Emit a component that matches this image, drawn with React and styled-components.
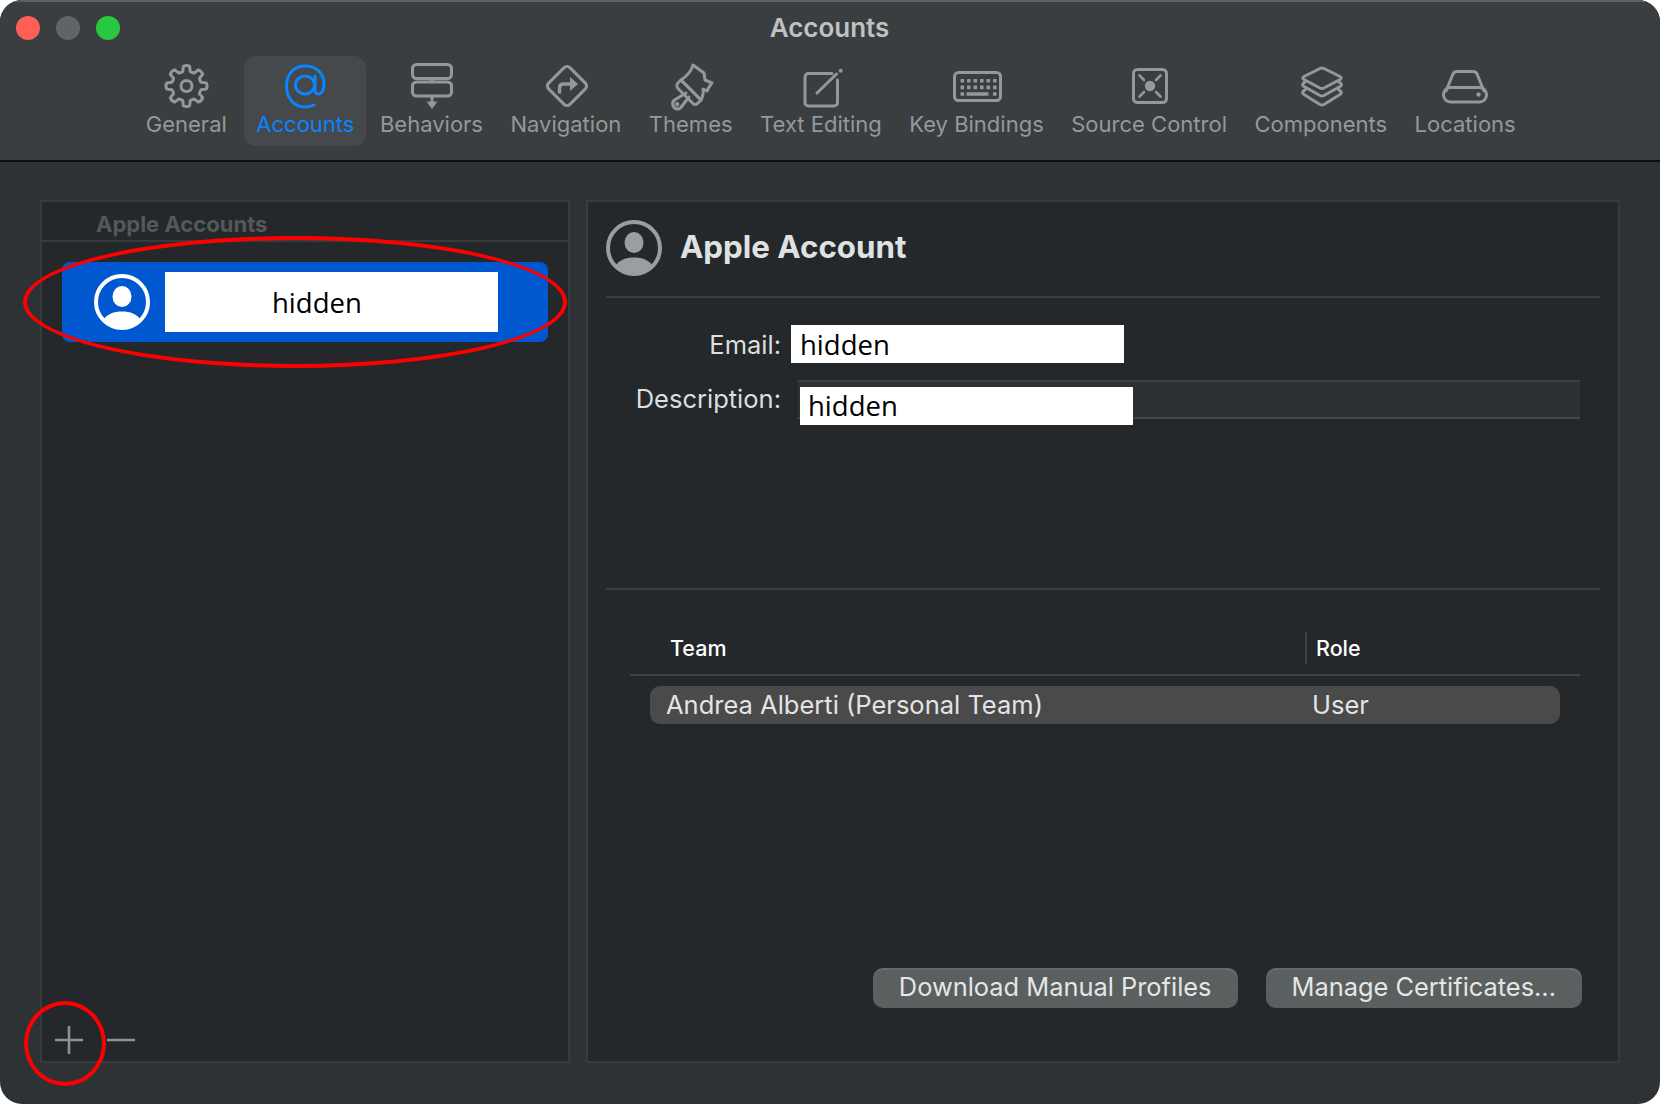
import React from "react";
import styled, { createGlobalStyle } from "styled-components";

const ICON = "#95989a";
const BLUE = "#0a84ff";

const gearPath = (cx, cy, teeth, outer, inner) => {
  const pts = [];
  const step = (Math.PI * 2) / teeth;
  for (let i = 0; i < teeth; i++) {
    const a = -Math.PI / 2 + i * step;
    const at = (r, o) => `${(cx + r * Math.cos(a + o)).toFixed(2)} ${(cy + r * Math.sin(a + o)).toFixed(2)}`;
    pts.push(`${i === 0 ? "M" : "L"}${at(inner, -step * 0.32)}`);
    pts.push(`L${at(outer, -step * 0.2)}`);
    pts.push(`Q${at(outer + 1.4, 0)} ${at(outer, step * 0.2)}`);
    pts.push(`L${at(inner, step * 0.32)}`);
    pts.push(`Q${at(inner - 0.6, step * 0.5)} ${at(inner, step * 0.68)}`);
  }
  return pts.join(" ") + "Z";
};

const Svg = ({ children, color = ICON }) => (
  <IconSvg viewBox="0 0 50 50" stroke={color} fill="none" strokeWidth="3" strokeLinecap="round" strokeLinejoin="round">
    {children}
  </IconSvg>
);

const GeneralIcon = () => (
  <Svg>
    <path d={gearPath(25.5, 26, 8, 20, 15)} />
    <circle cx="25.5" cy="26" r="5.5" />
  </Svg>
);

const AccountsIcon = () => (
  <Svg color={BLUE}>
    <ellipse cx="25" cy="25" rx="9.5" ry="9" />
    <path d="M34 45 C31 46.5 28 47 25 47 C13 47 6.5 37 6.5 26 C6.5 14 14 6 25 6 C36 6 44 13 44 24 C44 29 42 34 38.5 34 C36 34 35 32 35 29 V16" />
  </Svg>
);

const BehaviorsIcon = () => (
  <Svg>
    <rect x="6.5" y="4.5" width="39" height="14" rx="4" />
    <rect x="6.5" y="22" width="39" height="14" rx="4" />
    <path d="M26 18.5 V22 M26 36 V42" />
    <path d="M20.5 41.5 H31.5 L26 49Z" fill={ICON} stroke="none" />
  </Svg>
);

const NavigationIcon = () => (
  <Svg>
    <rect x="11" y="11" width="30" height="30" rx="4" transform="rotate(45 26 26)" />
    <path d="M18.5 33.5 V28 Q18.5 24 22.5 24 H30" strokeLinecap="butt" strokeWidth="3.5" />
    <path d="M29 17 L37 24 L29 31Z" fill={ICON} stroke="none" />
  </Svg>
);

const ThemesIcon = () => (
  <Svg>
    <path d="M27 5 C25.5 11 21 16 15 20 L35 40 C37 36 38 33 37 29 L41 31 C42 28 44 26 46 23 L39 20 L38 13 Z" />
    <path d="M11.5 23.5 L15 20 L35 40 L31.5 43.5 C30 45 28 44.5 27 43.5 L12 28.5 C11 27.5 10.5 25 11.5 23.5Z" />
    <path d="M20 33 L8.5 40 C5 43 7 49 11.5 49 C13.5 49 15 48 16 46 L23 37" />
    <circle cx="11.2" cy="44.2" r="1.2" strokeWidth="2" />
  </Svg>
);

const TextEditingIcon = () => (
  <Svg>
    <path d="M36 13.5 H12.5 A3.5 3.5 0 0 0 9 17 V42.5 A3.5 3.5 0 0 0 12.5 46 H38 A3.5 3.5 0 0 0 41.5 42.5 V20" />
    <path d="M21 33 L40.5 14" />
    <circle cx="44.7" cy="10.7" r="2" fill={ICON} stroke="none" />
  </Svg>
);

const KEY_ROWS = [19, 25.6, 32.2];
const KEY_COLS = [8.5, 15, 21.5, 28, 34.5, 41];

const KeyBindingsIcon = () => (
  <Svg>
    <rect x="2.5" y="12.5" width="46" height="28" rx="4" />
    <g fill={ICON} stroke="none">
      {KEY_ROWS.slice(0, 2).map((y) =>
        KEY_COLS.map((x) => <rect key={`${x}-${y}`} x={x} y={y} width="3.6" height="3.6" rx="0.6" />)
      )}
      <rect x="8.5" y="32.2" width="3.6" height="3.6" rx="0.6" />
      <rect x="14.5" y="32.2" width="22" height="3.6" rx="0.6" />
      <rect x="41" y="32.2" width="3.6" height="3.6" rx="0.6" />
    </g>
  </Svg>
);

const SourceControlIcon = () => (
  <Svg>
    <rect x="9.5" y="9.5" width="33" height="33" rx="4" />
    <circle cx="26" cy="26" r="5.2" fill={ICON} stroke="none" />
    <path d="M15.5 15.5 L20 20 M36.5 15.5 L32 20 M15.5 36.5 L20 32 M36.5 36.5 L32 32" strokeWidth="2.6" />
  </Svg>
);

const ComponentsIcon = () => (
  <Svg>
    <path d="M24 8.5 Q26 7.5 28 8.5 L44 16.5 Q46.5 18 44 19.5 L28 28 Q26 29 24 28 L8 19.5 Q5.5 18 8 16.5Z" />
    <path d="M9.5 21.5 L7.5 23 Q5.5 25 8 26.5 L24 35.5 Q26 36.5 28 35.5 L44 26.5 Q46.5 25 44.5 23 L42.5 21.5" />
    <path d="M9.5 29.5 L7.5 31 Q5.5 33 8 34.5 L24 44.5 Q26 45.5 28 44.5 L44 34.5 Q46.5 33 44.5 31 L42.5 29.5" />
  </Svg>
);

const LocationsIcon = () => (
  <Svg>
    <rect x="3.5" y="27.5" width="43" height="14.5" rx="7" />
    <path d="M6 31 L13 14 Q14 11.5 17 11.5 H33 Q36 11.5 37 14 L44 31" />
    <circle cx="38.5" cy="34.5" r="2.2" fill={ICON} stroke="none" />
  </Svg>
);

const tabs = [
  { label: "General", icon: GeneralIcon },
  { label: "Accounts", icon: AccountsIcon, active: true },
  { label: "Behaviors", icon: BehaviorsIcon },
  { label: "Navigation", icon: NavigationIcon },
  { label: "Themes", icon: ThemesIcon },
  { label: "Text Editing", icon: TextEditingIcon },
  { label: "Key Bindings", icon: KeyBindingsIcon },
  { label: "Source Control", icon: SourceControlIcon },
  { label: "Components", icon: ComponentsIcon },
  { label: "Locations", icon: LocationsIcon },
];

const Avatar = ({ size = 56, ring, person }) => (
  <AvatarSvg viewBox="0 0 56 56" width={size} height={size}>
    <circle cx="28" cy="28" r="26" fill="none" stroke={ring} strokeWidth="4" />
    <ellipse cx="28" cy="22.5" rx="9.5" ry="10.5" fill={person} />
    <path d="M9 46 C13 40 20 37.5 28 37.5 C36 37.5 43 40 47 46 C42 51 35 54 28 54 C21 54 14 51 9 46Z" fill={person} />
  </AvatarSvg>
);

const App = () => {
  return (
    <>
      <GlobalStyle />
      <Window>
        <TitleBar>
          <TitleRow>
            <Lights>
              <Light color="#ff5f57" />
              <Light color="#5f6465" />
              <Light color="#28c840" />
            </Lights>
            <WindowTitle>Accounts</WindowTitle>
          </TitleRow>
          <Tabs>
            {tabs.map(({ label, icon: Icon, active }) => (
              <Tab key={label} $active={active}>
                <IconSlot>
                  <Icon />
                </IconSlot>
                <TabLabel $active={active}>{label}</TabLabel>
              </Tab>
            ))}
          </Tabs>
        </TitleBar>

        <Body>
          <LeftPanel>
            <ListHeader>Apple Accounts</ListHeader>
            <List>
              <AccountRow>
                <Avatar ring="#fff" person="#fff" />
                <RowRedaction>hidden</RowRedaction>
              </AccountRow>
            </List>
            <ListFooter>
              <FooterIcon viewBox="0 0 28 28">
                <path d="M0.5 14 H27.5 M14 0.5 V27.5" />
              </FooterIcon>
              <FooterIcon viewBox="0 0 28 28">
                <path d="M0.5 14 H27.5" />
              </FooterIcon>
            </ListFooter>
            <RedEllipse />
            <RedCircle />
          </LeftPanel>

          <RightPanel>
            <DetailHeader>
              <Avatar ring="#9b9ea0" person="#9b9ea0" />
              <DetailTitle>Apple Account</DetailTitle>
            </DetailHeader>
            <Form>
              <FieldLabel>Email:</FieldLabel>
              <EmailField>hidden</EmailField>
              <DescriptionLabel>Description:</DescriptionLabel>
              <DescriptionField>
                <DescriptionRedaction>hidden</DescriptionRedaction>
              </DescriptionField>
            </Form>
            <TeamSection>
              <TeamHead>
                <HeadCell>Team</HeadCell>
                <RoleCell>Role</RoleCell>
              </TeamHead>
              <TeamRow>
                <span>Andrea Alberti (Personal Team)</span>
                <span>User</span>
              </TeamRow>
            </TeamSection>
            <Actions>
              <ActionButton>Download Manual Profiles</ActionButton>
              <ActionButton>Manage Certificates...</ActionButton>
            </Actions>
          </RightPanel>
        </Body>
      </Window>
    </>
  );
};

export default App;

const GlobalStyle = createGlobalStyle`
  html, body {
    margin: 0;
    padding: 0;
    background: #fff;
  }
  * {
    box-sizing: border-box;
  }
`;

const Window = styled.div`
  width: 1660px;
  height: 1104px;
  display: flex;
  flex-direction: column;
  border-radius: 22px;
  overflow: hidden;
  background: #2d3235;
  font-family: Inter, "Liberation Sans", sans-serif;
`;

const TitleBar = styled.header`
  height: 162px;
  flex-shrink: 0;
  background: #3a3e40;
  border-top: 2px solid #5e6163;
  border-bottom: 2px solid #0c0d0e;
`;

const TitleRow = styled.div`
  height: 54px;
  display: grid;
  grid-template-columns: 1fr auto 1fr;
  align-items: center;
`;

const Lights = styled.div`
  display: flex;
  gap: 16px;
  padding-left: 16px;
  margin-top: -2px;
`;

const Light = styled.span`
  width: 24px;
  height: 24px;
  border-radius: 50%;
  background: ${(p) => p.color};
`;

const WindowTitle = styled.div`
  font-size: 26px;
  font-weight: 600;
  color: #bfc1c2;
  margin: -4px 0 0 -1px;
`;

const Tabs = styled.nav`
  display: flex;
  justify-content: center;
  gap: 3.5px;
  padding-left: 1.5px;
`;

const Tab = styled.div`
  height: 90px;
  padding: 0 12px;
  display: flex;
  flex-direction: column;
  align-items: center;
  border-radius: 12px;
  background: ${(p) => (p.$active ? "#45494b" : "transparent")};
  ${(p) => p.$active && "margin: 0 -2px 0 2px;"}
`;

const IconSlot = styled.div`
  height: 50px;
  margin-top: 4px;
`;

const IconSvg = styled.svg`
  display: block;
  width: 50px;
  height: 50px;
  overflow: visible;
`;

const TabLabel = styled.span`
  font-size: 22px;
  line-height: 28px;
  white-space: nowrap;
  color: ${(p) => (p.$active ? BLUE : "#95989a")};
`;

const Body = styled.main`
  flex: 1;
  min-height: 0;
  display: flex;
  gap: 16px;
  padding: 38px 40px 41px;
`;

const Panel = styled.section`
  position: relative;
  display: flex;
  flex-direction: column;
  background: #24282b;
  border: 2px solid #373b3e;
`;

const LeftPanel = styled(Panel)`
  width: 530px;
`;

const RightPanel = styled(Panel)`
  flex: 1;
`;

const ListHeader = styled.div`
  height: 40px;
  flex-shrink: 0;
  display: flex;
  align-items: center;
  padding: 5px 0 0 54px;
  border-bottom: 2px solid #373b3e;
  font-size: 22px;
  font-weight: 700;
  color: #54585b;
`;

const List = styled.div`
  flex: 1;
  padding: 20px;
`;

const AccountRow = styled.div`
  height: 80px;
  display: flex;
  align-items: center;
  gap: 15px;
  padding-left: 32px;
  border-radius: 8px;
  background: #0058d0;
`;

const AvatarSvg = styled.svg`
  display: block;
  flex-shrink: 0;
`;

const redactionFont = `
  font-family: "Open Sans", "Noto Sans", sans-serif;
  font-size: 27.5px;
  color: #000;
  background: #fff;
`;

const RowRedaction = styled.div`
  ${redactionFont}
  width: 333px;
  height: 60px;
  padding: 12px 0 0 107px;
  line-height: 38px;
`;

const ListFooter = styled.div`
  display: flex;
  gap: 24px;
  padding: 0 0 7px 13px;
`;

const FooterIcon = styled.svg`
  width: 28px;
  height: 28px;
  fill: none;
  stroke: #8e9092;
  stroke-width: 2.6;
  stroke-linecap: round;
`;

const RedEllipse = styled.div`
  position: absolute;
  left: -19px;
  top: 34px;
  width: 544px;
  height: 132px;
  border: 4.5px solid #f00;
  border-radius: 50%;
`;

const RedCircle = styled.div`
  position: absolute;
  left: -18px;
  bottom: -25px;
  width: 82px;
  height: 85px;
  border: 4.5px solid #f00;
  border-radius: 50%;
`;

const DetailHeader = styled.div`
  display: flex;
  align-items: center;
  gap: 18px;
  margin: 18px 18px 0;
  padding-bottom: 20px;
  border-bottom: 2px solid #393d40;
`;

const DetailTitle = styled.h1`
  margin: -3px 0 0;
  font-size: 31.3px;
  font-weight: 700;
  color: #dfe1e2;
`;

const Form = styled.div`
  display: grid;
  grid-template-columns: 175px 1fr;
  column-gap: 10px;
  row-gap: 17px;
  align-items: center;
  margin: 27px 18px 0;
  padding-bottom: 169px;
  border-bottom: 2px solid #393d40;
`;

const FieldLabel = styled.label`
  text-align: right;
  font-size: 25.5px;
  color: #dcdedf;
  padding-top: 1px;
`;

const DescriptionLabel = styled(FieldLabel)`
  padding-top: 0;
  margin-top: -2px;
`;

const EmailField = styled.div`
  ${redactionFont}
  width: 333px;
  height: 38px;
  padding-left: 9px;
  line-height: 40px;
`;

const DescriptionField = styled.div`
  position: relative;
  height: 39px;
  margin: 0 20px 0 7px;
  background: #2c3134;
  border-top: 2px solid #3a3e41;
  border-bottom: 2px solid #43474a;
`;

const DescriptionRedaction = styled.div`
  ${redactionFont}
  position: absolute;
  left: 2px;
  top: 5px;
  width: 333px;
  height: 38px;
  padding-left: 8px;
  line-height: 38px;
`;

const TeamSection = styled.div`
  margin: 0 18px;
`;

const TeamHead = styled.div`
  display: grid;
  grid-template-columns: 675px 1fr;
  margin: 42px 20px 0 24px;
  padding-bottom: 10px;
  border-bottom: 2px solid #3f4346;
`;

const HeadCell = styled.div`
  height: 32px;
  display: flex;
  align-items: center;
  padding-left: 40px;
  font-size: 21.5px;
  font-weight: 500;
  color: #fff;
`;

const RoleCell = styled(HeadCell)`
  padding-left: 9px;
  border-left: 2px solid #3f4346;
`;

const TeamRow = styled.div`
  height: 38px;
  display: grid;
  grid-template-columns: 646px 1fr;
  align-items: center;
  margin: 10px 40px 0 44px;
  padding: 0 0 2px 16px;
  border-radius: 10px;
  background: #4a4a4a;
  font-size: 25.5px;
  color: #e4e4e4;
`;

const Actions = styled.div`
  display: flex;
  justify-content: flex-end;
  gap: 28px;
  margin-top: auto;
  padding: 0 36px 53px 0;
`;

const ActionButton = styled.button`
  height: 40px;
  padding: 0 26px 4px;
  border: none;
  border-radius: 10px;
  background: #5a5f5f;
  box-shadow: inset 0 2px 0 rgba(255, 255, 255, 0.08);
  font-family: inherit;
  font-size: 25.4px;
  color: #e6e6e6;
`;
